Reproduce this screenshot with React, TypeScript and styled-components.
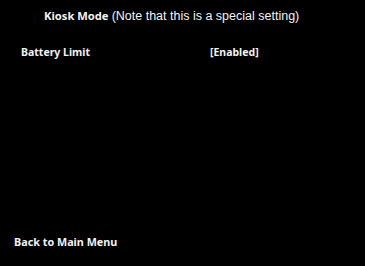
import React from "react";
import styled, { createGlobalStyle } from "styled-components";

const Global = createGlobalStyle`
  html, body { margin: 0; padding: 0; background: #000; }
  #root { height: 266px; }
`;

const Screen = styled.div`
  box-sizing: border-box;
  width: 365px;
  height: 266px;
  background: #000;
  color: #f2f2f2;
  display: flex;
  flex-direction: column;
  font-family: "Noto Sans", "DejaVu Sans", sans-serif;
`;

const Title = styled.div`
  padding: 8px 0 0 44px;
  font-size: 12px;
  line-height: 16px;
  white-space: nowrap;
`;

const TitleBold = styled.span`
  font-family: "Noto Sans", "DejaVu Sans", sans-serif;
  font-weight: bold;
  font-size: 11.2px;
`;

const TitleNote = styled.span`
  font-family: "Liberation Sans", Arial, sans-serif;
  font-size: 12.5px;
`;

const Row = styled.div`
  display: grid;
  grid-template-columns: 189px auto;
  padding: 21px 0 0 21px;
  font-weight: bold;
  font-size: 10.5px;
  line-height: 14px;
`;

const Spacer = styled.div`
  flex: 1;
`;

const Footer = styled.div`
  padding: 0 0 17px 14px;
  font-weight: bold;
  font-size: 10.8px;
  line-height: 14px;
`;

export default function App() {
  return (
    <>
      <Global />
      <Screen>
        <Title>
          <TitleBold>Kiosk Mode</TitleBold> <TitleNote>(Note that this is a special setting)</TitleNote>
        </Title>
        <Row>
          <span>Battery Limit</span>
          <span>[Enabled]</span>
        </Row>
        <Spacer />
        <Footer>Back to Main Menu</Footer>
      </Screen>
    </>
  );
}
